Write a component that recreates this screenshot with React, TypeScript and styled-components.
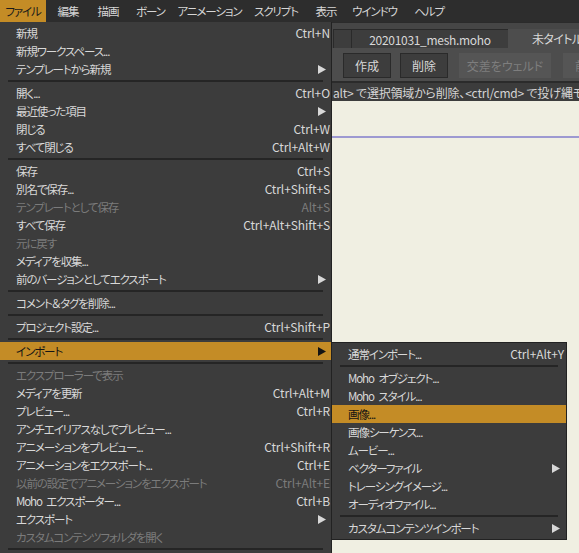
import React from 'react'
import styled, { createGlobalStyle } from 'styled-components'

interface Entry {
  label?: string;
  shortcut?: string;
  arrow?: boolean;
  disabled?: boolean;
  active?: boolean;
  sep?: boolean;
}

const GlobalStyle = createGlobalStyle`
  html, body {
    margin: 0;
    padding: 0;
    background: #f0efe2;
  }
  body {
    font-family: "Noto Sans CJK JP", "Noto Sans", sans-serif;
    font-size: 11.5px;
    letter-spacing: -1.1px;
    word-spacing: 3px;
    font-feature-settings: "palt";
  }
`

const Screen = styled('div')`
  position: relative;
  width: 579px;
  height: 553px;
  overflow: hidden;
  display: flex;
  flex-direction: column;
`

const MenuBar = styled('div')`
  height: 22px;
  background: #2d2d2d;
  display: flex;
  flex-shrink: 0;
`

const MenuBarItem = styled('div')<{ $active?: boolean; $width: number }>`
  width: ${(p): number => p.$width}px;
  flex-shrink: 0;
  text-align: center;
  font-size: 11.5px;
  letter-spacing: -1.1px;
  line-height: 22px;
  color: ${(p): string => (p.$active ? '#1a1a1a' : '#d6d6d6')};
  background: ${(p): string => (p.$active ? '#c48c26' : 'transparent')};
  white-space: nowrap;
`

const Workspace = styled('div')`
  flex: 1;
  display: flex;
  min-height: 0;
`

const SidePane = styled('div')`
  width: 332px;
  flex-shrink: 0;
  background: #3c3c3c;
`

const DocArea = styled('div')`
  flex: 1;
  display: flex;
  flex-direction: column;
  min-width: 0;
  overflow: hidden;
`

const TabStrip = styled('div')`
  height: 26px;
  box-sizing: border-box;
  padding: 6px 0 0 1px;
  background: #464646;
  border-top: 1px solid #2b2b2b;
  display: flex;
  flex-shrink: 0;
`

const Tab = styled('div')<{ $width?: number; $active?: boolean }>`
  ${(p): string => (p.$width ? `width: ${p.$width}px;` : 'flex: 1;')}
  flex-shrink: 0;
  box-sizing: border-box;
  height: 20px;
  line-height: 19px;
  font-size: 12px;
  letter-spacing: ${(p): string => (p.$active ? '-0.6px' : '-0.3px')};
  text-align: ${(p): string => (p.$active ? 'left' : 'center')};
  padding-left: ${(p): string => (p.$active ? '24px' : '0')};
  color: #d8d8d8;
  white-space: nowrap;
  overflow: hidden;
  background: ${(p): string => (p.$active ? '#4d4d4d' : '#3d3d3d')};
  border: ${(p): string => (p.$active ? 'none' : '1px solid #2a2a2a')};
  border-bottom: none;
  & + & {
    margin-left: -1px;
  }
`

const Toolbar = styled('div')`
  height: 33px;
  box-sizing: border-box;
  padding: 5px 0 0 11px;
  background: #4d4d4d;
  display: flex;
  flex-shrink: 0;
`

const ToolButton = styled('div')<{ $width: number; $disabled?: boolean; $gap: number }>`
  width: ${(p): number => p.$width}px;
  margin-left: ${(p): number => p.$gap}px;
  flex-shrink: 0;
  height: 25px;
  box-sizing: border-box;
  line-height: 23px;
  font-size: 12px;
  letter-spacing: 0;
  text-align: center;
  white-space: nowrap;
  overflow: hidden;
  color: ${(p): string => (p.$disabled ? '#7e7e7e' : '#d8d8d8')};
  background: ${(p): string => (p.$disabled ? '#555555' : '#3d3d3d')};
  border: 1px solid ${(p): string => (p.$disabled ? '#555555' : '#2a2a2a')};
`

const StatusBar = styled('div')`
  height: 20px;
  box-sizing: border-box;
  border-top: 2px solid #2b2b2b;
  padding: 1px 0 0 1px;
  background: #3c3c3c;
  color: #d4d4d4;
  font-size: 12px;
  line-height: 17px;
  letter-spacing: -0.2px;
  word-spacing: 0;
  white-space: nowrap;
  flex-shrink: 0;
`

const Canvas = styled('div')`
  flex: 1;
  background: #f0efe2;
  padding-top: 35px;
`

const Guide = styled('div')`
  height: 2px;
  background: #9d99d1;
`

const Dropdown = styled('div')<{ $left: number; $top: number; $width: number; $sub?: boolean }>`
  position: absolute;
  left: ${(p): number => p.$left}px;
  top: ${(p): number => p.$top}px;
  width: ${(p): number => p.$width}px;
  box-sizing: border-box;
  background: #3c3c3c;
  padding: 2px 0;
  border-right: 1px solid #222222;
  ${(p): string => (p.$sub ? 'border: 1px solid #222222;' : '')}
`

const Row = styled('div')<{ $active?: boolean; $disabled?: boolean; $inset: number; $end: number }>`
  height: 18px;
  line-height: 18px;
  display: flex;
  align-items: center;
  padding: 0 ${(p): number => p.$end}px 0 ${(p): number => p.$inset}px;
  white-space: nowrap;
  color: ${(p): string => (p.$active ? '#141414' : p.$disabled ? '#7b7b7b' : '#d8d8d8')};
  background: ${(p): string => (p.$active ? '#c48c26' : 'transparent')};
`

const Shortcut = styled('span')`
  margin-left: auto;
  font-size: 12px;
  letter-spacing: -0.1px;
`

const ArrowBox = styled('span')`
  margin-left: auto;
  margin-right: 4px;
  display: flex;
`

const Separator = styled('div')<{ $left: number; $right: number }>`
  height: 2px;
  margin: 2px ${(p): number => p.$right}px 2px ${(p): number => p.$left}px;
  background: #252525;
`

const Arrow = (): JSX.Element => (
  <svg width="8" height="9" viewBox="0 0 8 9">
    <polygon points="0,0 8,4.5 0,9" fill="currentColor" />
  </svg>
)

// widths picked so each label sits centred where the real menu bar has it
const menuBar: [string, number][] = [
  ['ファイル', 46],
  ['編集', 44],
  ['描画', 36],
  ['ボーン', 49],
  ['アニメーション', 69],
  ['スクリプト', 64],
  ['表示', 36],
  ['ウインドウ', 61],
  ['ヘルプ', 48],
]

const fileMenu: Entry[] = [
  { label: '新規', shortcut: 'Ctrl+N' },
  { label: '新規ワークスペース...' },
  { label: 'テンプレートから新規', arrow: true },
  { sep: true },
  { label: '開く...', shortcut: 'Ctrl+O' },
  { label: '最近使った項目', arrow: true },
  { label: '閉じる', shortcut: 'Ctrl+W' },
  { label: 'すべて閉じる', shortcut: 'Ctrl+Alt+W' },
  { sep: true },
  { label: '保存', shortcut: 'Ctrl+S' },
  { label: '別名で保存...', shortcut: 'Ctrl+Shift+S' },
  { label: 'テンプレートとして保存', shortcut: 'Alt+S', disabled: true },
  { label: 'すべて保存', shortcut: 'Ctrl+Alt+Shift+S' },
  { label: '元に戻す', disabled: true },
  { label: 'メディアを収集...' },
  { label: '前のバージョンとしてエクスポート', arrow: true },
  { sep: true },
  { label: 'コメント＆タグを削除...' },
  { sep: true },
  { label: 'プロジェクト設定...', shortcut: 'Ctrl+Shift+P' },
  { sep: true },
  { label: 'インポート', arrow: true, active: true },
  { sep: true },
  { label: 'エクスプローラーで表示', disabled: true },
  { label: 'メディアを更新', shortcut: 'Ctrl+Alt+M' },
  { label: 'プレビュー...', shortcut: 'Ctrl+R' },
  { label: 'アンチエイリアスなしでプレビュー...' },
  { label: 'アニメーションをプレビュー...', shortcut: 'Ctrl+Shift+R' },
  { label: 'アニメーションをエクスポート...', shortcut: 'Ctrl+E' },
  { label: '以前の設定でアニメーションをエクスポート', shortcut: 'Ctrl+Alt+E', disabled: true },
  { label: 'Moho エクスポーター...', shortcut: 'Ctrl+B' },
  { label: 'エクスポート', arrow: true },
  { label: 'カスタムコンテンツフォルダを開く', disabled: true },
  { sep: true },
]

const importMenu: Entry[] = [
  { label: '通常インポート...', shortcut: 'Ctrl+Alt+Y' },
  { sep: true },
  { label: 'Moho オブジェクト...' },
  { label: 'Moho スタイル...' },
  { label: '画像...', active: true },
  { label: '画像シーケンス...' },
  { label: 'ムービー...' },
  { label: 'ベクターファイル', arrow: true },
  { label: 'トレーシングイメージ...' },
  { label: 'オーディオファイル...' },
  { sep: true },
  { label: 'カスタムコンテンツインポート', arrow: true },
]

const renderEntries = (entries: Entry[], inset: number, end: number, sepLeft: number, sepRight: number): React.ReactNode =>
  entries.map((e, i): React.ReactNode => {
    if (e.sep) {
      return <Separator key={`sep-${i}`} $left={sepLeft} $right={sepRight} />
    }
    return (
      <Row key={e.label} $active={e.active} $disabled={e.disabled} $inset={inset} $end={end}>
        <span>{e.label}</span>
        {e.shortcut && <Shortcut>{e.shortcut}</Shortcut>}
        {e.arrow && <ArrowBox><Arrow /></ArrowBox>}
      </Row>
    )
  })

const App = (): JSX.Element => {
  return (
    <Screen>
      <GlobalStyle />
      <MenuBar>
        {menuBar.map(([name, width], i): React.ReactNode => (
          <MenuBarItem key={name} $width={width} $active={i === 0}>{name}</MenuBarItem>
        ))}
      </MenuBar>
      <Workspace>
        <SidePane />
        <DocArea>
          <TabStrip>
            <Tab $width={19} />
            <Tab $width={158}>20201031_mesh.moho</Tab>
            <Tab $active>未タイトル-1</Tab>
          </TabStrip>
          <Toolbar>
            <ToolButton $width={48} $gap={0}>作成</ToolButton>
            <ToolButton $width={48} $gap={9}>削除</ToolButton>
            <ToolButton $width={92} $gap={11} $disabled>交差をウェルド</ToolButton>
            <ToolButton $width={48} $gap={12} $disabled>前面</ToolButton>
          </Toolbar>
          <StatusBar>alt&gt; で選択領域から削除、&lt;ctrl/cmd&gt; で投げ縄モード</StatusBar>
          <Canvas>
            <Guide />
          </Canvas>
        </DocArea>
      </Workspace>

      <Dropdown $left={0} $top={22} $width={332}>
        {renderEntries(fileMenu, 16, 1, 8, 8)}
      </Dropdown>
      <Dropdown $left={331} $top={342} $width={236} $sub>
        {renderEntries(importMenu, 16, 2, 8, 8)}
      </Dropdown>
    </Screen>
  )
}

export default App
